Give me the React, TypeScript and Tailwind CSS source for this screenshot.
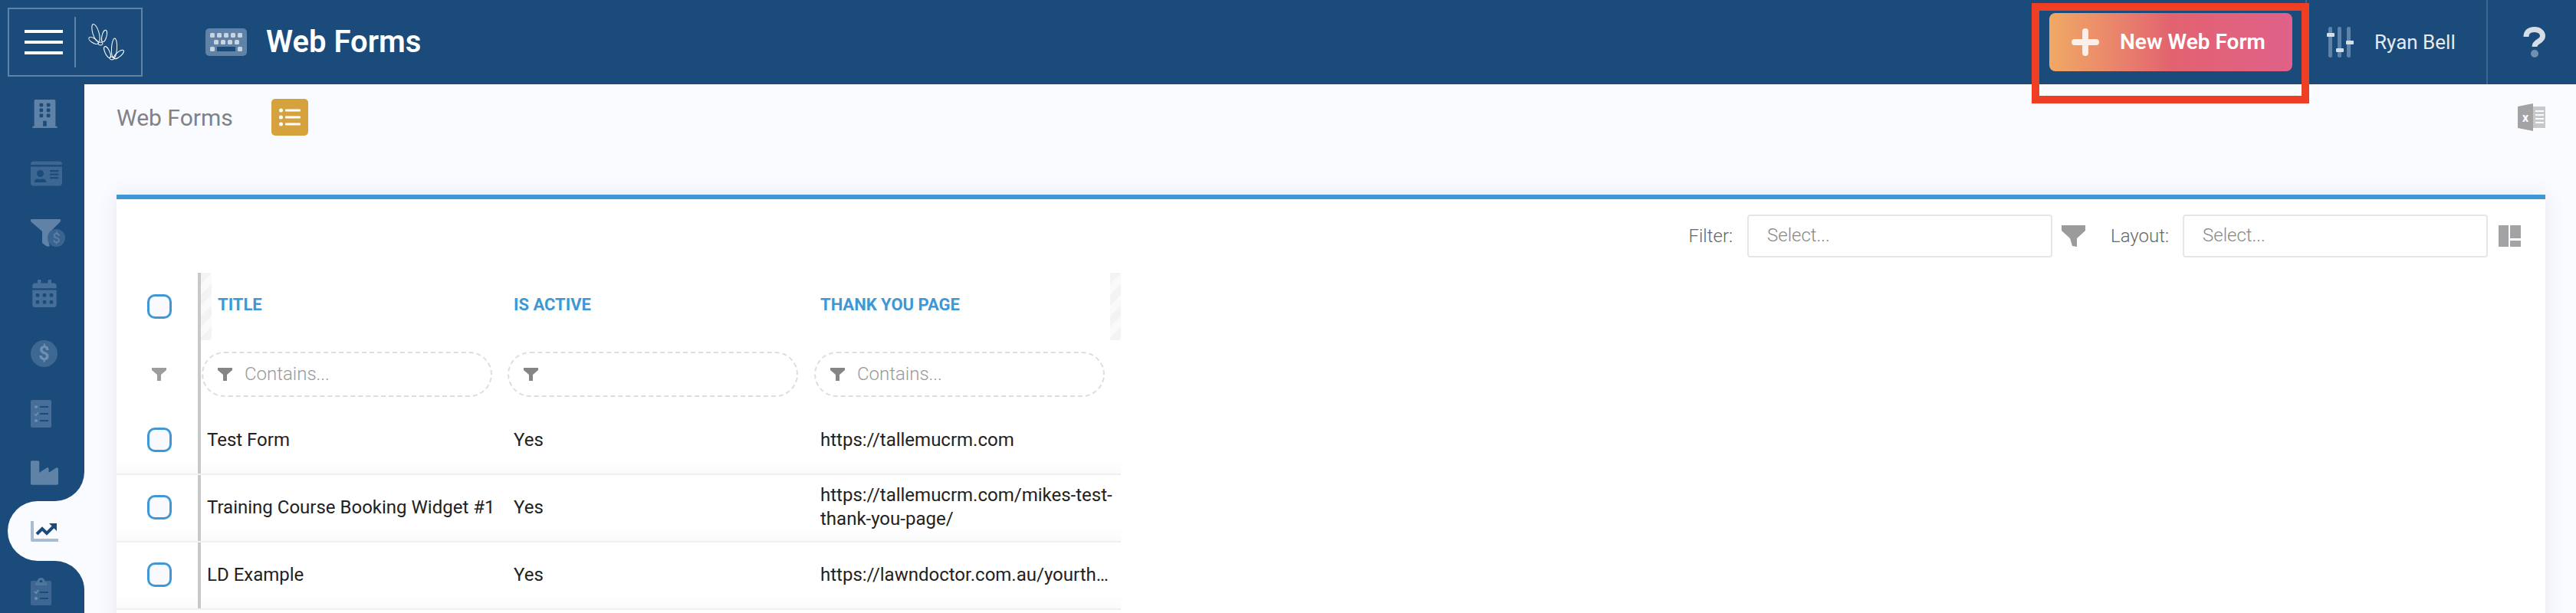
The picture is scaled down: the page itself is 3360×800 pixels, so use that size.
import { FaBuilding, FaIdCard, FaCalendarAlt, FaIndustry } from "react-icons/fa";

const FONT = { fontFamily: "Roboto, sans-serif" };

function Logo() {
  const leaves = [
    [126, 43, 4, 12, -17],
    [137, 47, 3, 8, 14],
    [123, 53, 3, 7, -58],
    [132, 57, 3, 2, 0],
    [150, 63, 3.5, 13, 3],
    [141, 68, 3, 8, -25],
    [156, 71, 3, 8, 50],
    [147, 76, 3, 2, 0],
  ];
  return (
    <svg width="50" height="50" viewBox="114 30 50 50" fill="none" stroke="#fff" strokeWidth="1">
      {leaves.map(([cx, cy, rx, ry, r], i) => (
        <ellipse key={i} cx={cx} cy={cy} rx={rx} ry={ry} transform={`rotate(${r} ${cx} ${cy})`} />
      ))}
    </svg>
  );
}

function KeyboardIcon() {
  const rows = [
    { y: 6, xs: [6, 15, 24, 33, 42] },
    { y: 15, xs: [11, 20, 29, 38] },
    { y: 24, xs: [6, 42] },
  ];
  return (
    <svg width="54" height="36" viewBox="0 0 54 36">
      <rect width="54" height="36" rx="5" fill="#5f82a6" />
      {rows.map((row) =>
        row.xs.map((x) => <rect key={`${row.y}-${x}`} x={x} y={row.y} width="6" height="6" rx="1.5" fill="#c9d4df" />)
      )}
      <rect x="15" y="24" width="24" height="6" fill="#1b4b7a" />
    </svg>
  );
}

function SlidersIcon() {
  return (
    <svg width="35" height="40" viewBox="0 0 35 40">
      <g fill="#5f82a6">
        <rect x="2" y="0" width="5" height="40" rx="2" />
        <rect x="14" y="0" width="5" height="40" rx="2" />
        <rect x="26" y="0" width="5" height="40" rx="2" />
      </g>
      <g fill="#d5dde6">
        <rect x="0" y="8" width="10" height="5" rx="1" />
        <rect x="12" y="28" width="10" height="5" rx="1" />
        <rect x="25" y="18" width="10" height="5" rx="1" />
      </g>
    </svg>
  );
}

function QuestionIcon() {
  return (
    <svg width="29" height="40" viewBox="0 0 29 40">
      <path d="M4 13C4 6 9 3.500 15 3.500C21 3.500 25.500 7 25.500 12C25.500 19.500 15 18.500 15 26" fill="none" stroke="#d5dde6" strokeWidth="7" />
      <ellipse cx="15" cy="35" rx="5" ry="5" fill="#6f90b0" />
    </svg>
  );
}

function FunnelDollar() {
  return (
    <svg width="45" height="36" viewBox="0 0 45 36">
      <path d="M1 0H38C39 0 39.500 2 39 3L27 15C23 20 22 28 25 35C24 36 22 36 20 35L15 31V16L0 3C-0.500 2 0 0 1 0Z" fill="#5f82a6" />
      <circle cx="33.500" cy="24.500" r="11.500" fill="#3a6490" />
      <text x="33.500" y="31" textAnchor="middle" fontSize="18" fill="#5f82a6" style={FONT}>$</text>
    </svg>
  );
}

function DollarCircle() {
  return (
    <svg width="35" height="35" viewBox="0 0 35 35">
      <circle cx="17.500" cy="17.500" r="17.500" fill="#3e6892" />
      <text x="17.500" y="26" textAnchor="middle" fontSize="25" fontWeight="700" fill="#6f90b0" style={FONT}>$</text>
    </svg>
  );
}

function TasksIcon() {
  return (
    <svg width="27" height="36" viewBox="0 0 27 36">
      <rect width="27" height="36" rx="2" fill="#466e98" />
      <circle cx="7" cy="9" r="2" fill="#6f90b0" />
      <path d="M5 18L7 20L10 16" stroke="#6f90b0" strokeWidth="1.500" fill="none" />
      <circle cx="7" cy="27" r="2" fill="#6f90b0" />
      <g fill="#1b4b7a">
        <rect x="12" y="8" width="11" height="2" />
        <rect x="12" y="17" width="11" height="2" />
        <rect x="12" y="26" width="11" height="2" />
      </g>
    </svg>
  );
}

function ChartIcon() {
  return (
    <svg width="36" height="27" viewBox="0 0 36 27">
      <path d="M0 0H4V23H36V27H2C1 27 0 26 0 25Z" fill="#a9bcd2" />
      <path d="M8 17L15 10L21 16L30 7" fill="none" stroke="#1b4b7a" strokeWidth="4" />
      <path d="M24 3H34V13Z" fill="#1b4b7a" />
    </svg>
  );
}

function ClipboardIcon() {
  return (
    <svg width="27" height="36" viewBox="0 0 27 36">
      <rect y="4" width="27" height="32" rx="2" fill="#3d6692" />
      <circle cx="13.500" cy="5" r="5" fill="#4f769d" />
      <circle cx="13.500" cy="5" r="2" fill="#1b4b7a" />
      <rect x="6" y="6" width="15" height="4" fill="#4f769d" />
      <path d="M5 18L7 20L10 16" stroke="#6f90b0" strokeWidth="1.500" fill="none" />
      <circle cx="7" cy="27" r="2" fill="#6f90b0" />
      <g fill="#1b4b7a">
        <rect x="12" y="18" width="11" height="2" />
        <rect x="12" y="26" width="11" height="2" />
      </g>
    </svg>
  );
}

function ListIcon() {
  return (
    <svg width="48" height="48" viewBox="0 0 48 48">
      <rect width="48" height="48" rx="5" fill="#d6a23e" />
      <g fill="#fff">
        <circle cx="12.500" cy="15" r="2.500" />
        <circle cx="12.500" cy="24" r="2.500" />
        <circle cx="12.500" cy="33" r="2.500" />
        <rect x="18" y="13.500" width="20" height="3" rx="1" />
        <rect x="18" y="22.500" width="20" height="3" rx="1" />
        <rect x="18" y="31.500" width="20" height="3" rx="1" />
      </g>
    </svg>
  );
}

function ExcelIcon() {
  return (
    <svg width="36" height="36" viewBox="0 0 36 36">
      <path d="M0 4L20 0V36L0 32Z" fill="#a3a3a6" />
      <rect x="20" y="4" width="16" height="28" fill="#c8c8ca" />
      <g fill="#fafbff">
        <rect x="23" y="9" width="11" height="2" />
        <rect x="23" y="14" width="11" height="2" />
        <rect x="23" y="19" width="11" height="2" />
        <rect x="23" y="24" width="11" height="2" />
      </g>
      <text x="10" y="24" textAnchor="middle" fontSize="16" fontWeight="700" fill="#fafbff" style={FONT}>x</text>
    </svg>
  );
}

function BigFunnel() {
  return (
    <svg width="31" height="28" viewBox="0 0 31 28">
      <path d="M0 0H31V7L20 17V28L14 27L11 17L0 7Z" fill="#9c9a9c" />
    </svg>
  );
}

function LayoutIcon() {
  return (
    <svg width="29" height="28" viewBox="0 0 29 28" fill="#a3a3a6">
      <rect width="13" height="28" />
      <rect x="15" width="14" height="17" />
      <rect x="15" y="20" width="14" height="8" />
    </svg>
  );
}

function SmallFunnel() {
  return (
    <svg width="19" height="17" viewBox="0 0 19 17">
      <path d="M0 0H19V3L12 9V17H7V9L0 3Z" fill="#858585" />
    </svg>
  );
}

function Checkbox() {
  return <div className="h-8 w-8 rounded-[10px] border-[3px] border-[#3f97d6] bg-[#f8faff]" />;
}

function SelectBox({ className = "" }: { className?: string }) {
  return (
    <div className={`flex h-14 w-[398px] items-center rounded border-2 border-[#e6e6e6] bg-white pb-[2px] pl-[24px] text-[24px] font-light text-[#888] ${className}`}>
      Select...
    </div>
  );
}

function FilterPill({ placeholder }: { placeholder?: string }) {
  return (
    <div className="flex h-[59px] w-[379px] items-center gap-4 rounded-[30px] border-2 border-dashed border-[#dedede] pl-[19px] text-[24px] font-light text-[#999]">
      <SmallFunnel />
      {placeholder && <span>{placeholder}</span>}
    </div>
  );
}

const rows = [
  { title: "Test Form", active: "Yes", url: "https://tallemucrm.com" },
  { title: "Training Course Booking Widget #1", active: "Yes", url: "https://tallemucrm.com/mikes-test-thank-you-page/" },
  { title: "LD Example", active: "Yes", url: "https://lawndoctor.com.au/yourthankyoupage/", clamp: true },
];

const gridCols = "grid grid-cols-[106px_4px_400px_400px_400px]";

export default function App() {
  return (
    <div className="flex h-[800px] w-[3360px] flex-col overflow-hidden bg-[#fafbff]" style={FONT}>
      {/* Header */}
      <header className="relative flex h-[110px] shrink-0 items-center bg-[#1b4b7a]">
        <div className="ml-[10px] flex h-[90px] w-[176px] items-center border-2 border-[#5f82a6]">
          <div className="ml-[20px] flex w-[50px] flex-col gap-[10px]">
            <div className="h-1 bg-white" />
            <div className="h-1 bg-white" />
            <div className="h-1 bg-white" />
          </div>
          <div className="ml-[15px] h-[66px] w-[2px] bg-[#5f82a6]" />
          <div className="ml-[14px]">
            <Logo />
          </div>
        </div>
        <div className="ml-[82px]">
          <KeyboardIcon />
        </div>
        <h1 className="ml-[25px] text-[40px] font-semibold text-white">Web Forms</h1>

        <div className="ml-auto flex h-full items-center">
          <button className="mb-[-8px] mt-[-8px] flex h-[76px] w-[317px] items-center rounded-lg bg-gradient-to-r from-[#f0a964] via-[#e2636f] to-[#e0618a] pl-[29px] text-[28px] font-semibold text-white">
            <svg width="36" height="36" viewBox="0 0 36 36" stroke="#fff" strokeOpacity="0.85" strokeWidth="8" strokeLinecap="round">
              <path d="M18 4V32M4 18H32" />
            </svg>
            <span className="ml-[27px]">New Web Form</span>
          </button>
          <div className="ml-[17px] flex h-full w-[236px] items-center border-l-2 border-[#3a658f] pl-[26px]">
            <SlidersIcon />
            <span className="ml-[27px] text-[26px] text-[#e4eaf0]">Ryan Bell</span>
          </div>
          <div className="flex h-full w-[117px] items-center border-l-2 border-[#3a658f] pl-[46px]">
            <QuestionIcon />
          </div>
        </div>

        <div className="absolute left-[2650px] top-[4px] z-10 h-[131px] w-[362px] border-[10px] border-[#ee3e23]" />
      </header>

      <div className="flex min-h-0 flex-1">
        {/* Sidebar */}
        <aside className="flex w-[110px] shrink-0 flex-col">
          <div className="flex h-[544px] flex-col rounded-br-[38px] bg-[#1b4b7a] pl-10">
            <FaBuilding className="mt-[20px] text-[37px] text-[#5f82a6]" />
            <FaIdCard className="mt-[39px] text-[41px] text-[#3d6692]" />
            <div className="mt-[39px]"><FunnelDollar /></div>
            <FaCalendarAlt className="mt-[43px] text-[36px] text-[#466e98]" />
            <div className="mt-[43px]"><DollarCircle /></div>
            <div className="mt-[43px]"><TasksIcon /></div>
            <FaIndustry className="mt-[41px] text-[36px] text-[#5f83a6]" />
          </div>
          <div className="h-[78px] bg-[#1b4b7a] pl-[10px]">
            <div className="flex h-full items-center rounded-l-[39px] bg-[#fafbff] pl-[30px]">
              <ChartIcon />
            </div>
          </div>
          <div className="flex-1 rounded-tr-[38px] bg-[#1b4b7a] pl-10 pt-[22px]">
            <ClipboardIcon />
          </div>
        </aside>

        {/* Main */}
        <main className="min-w-0 flex-1 pl-[42px] pr-[40px]">
          <div className="mt-[19px] flex h-12 items-center justify-between">
            <div className="flex items-center">
              <h2 className="w-[202px] text-[30px] text-[#808285]">Web Forms</h2>
              <ListIcon />
            </div>
            <ExcelIcon />
          </div>

          <section className="mt-[77px] h-[600px] border-t-[6px] border-[#3f97d6] bg-white shadow-[0_0_24px_rgba(90,100,150,0.12)]">
            <div className="flex items-center justify-end pr-8 pt-5 text-[24px] font-light text-[#666]">
              <span>Filter:</span>
              <SelectBox className="ml-[19px]" />
              <div className="ml-3"><BigFunnel /></div>
              <span className="ml-[33px]">Layout:</span>
              <SelectBox className="ml-[18px]" />
              <div className="ml-[14px]"><LayoutIcon /></div>
            </div>

            <div className="mt-5 w-[1310px]">
              {/* Column headers */}
              <div className={`${gridCols} h-[88px] items-center text-[22px] font-bold uppercase text-[#3f97d6]`}>
                <div className="flex justify-center pl-[6px]"><Checkbox /></div>
                <div className="h-full bg-[#c8c8c8]" />
                <div className="flex h-full items-center bg-[repeating-linear-gradient(135deg,#f3f3f3_0,#f3f3f3_10px,#fafafa_10px,#fafafa_20px)] bg-[length:14px_100%] bg-no-repeat pb-[6px] pl-[22px]">Title</div>
                <div className="pb-[6px] pl-2">Is Active</div>
                <div className="flex h-full items-center bg-[repeating-linear-gradient(135deg,#f3f3f3_0,#f3f3f3_10px,#fafafa_10px,#fafafa_20px)] bg-[length:14px_100%] bg-right bg-no-repeat pb-[6px] pl-2">Thank You Page</div>
              </div>

              {/* Column filters */}
              <div className={`${gridCols} h-[88px] items-center`}>
                <div className="flex justify-center pl-1 opacity-80"><SmallFunnel /></div>
                <div className="h-full bg-[#c8c8c8]" />
                <div className="pl-px"><FilterPill placeholder="Contains..." /></div>
                <FilterPill />
                <FilterPill placeholder="Contains..." />
              </div>

              {/* Rows */}
              {rows.map((row) => (
                <div key={row.title} className={`${gridCols} h-[88px] items-center border-b-2 border-[#f0f0f0] bg-gradient-to-b from-white from-80% to-[#fafafa] text-[24px] leading-[31px] text-[#222]`}>
                  <div className="flex justify-center pb-[2px] pl-[6px]"><Checkbox /></div>
                  <div className="h-full bg-[#c8c8c8]" />
                  <div className="whitespace-nowrap pb-[2px] pl-2">{row.title}</div>
                  <div className="pb-[2px] pl-2">{row.active}</div>
                  <div className={`pb-[2px] pl-2 pr-2 ${row.clamp ? "truncate" : ""}`}>{row.url}</div>
                </div>
              ))}
            </div>
          </section>
        </main>
      </div>
    </div>
  );
}
